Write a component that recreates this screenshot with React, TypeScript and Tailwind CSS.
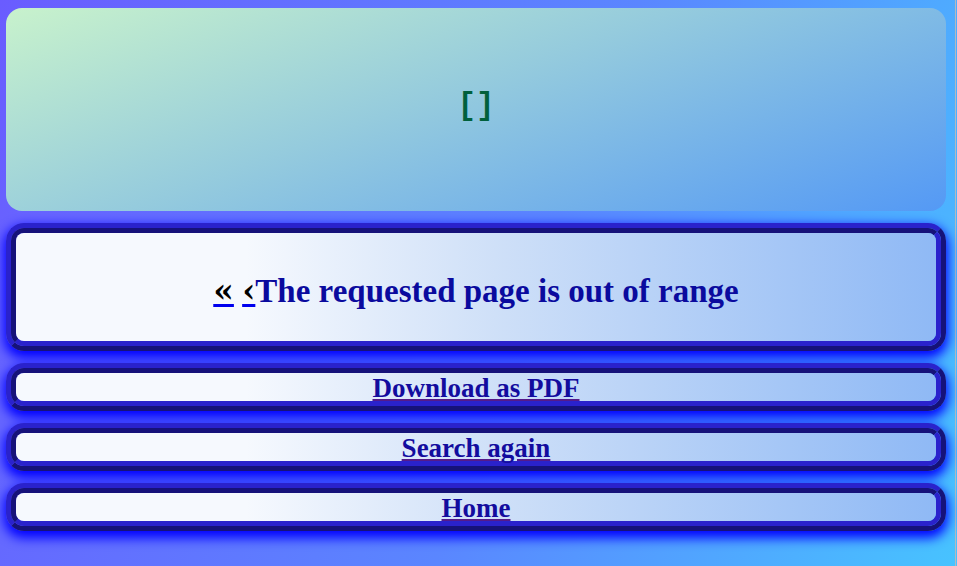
import React from "react";

const serif = "font-['Liberation_Serif','Times_New_Roman',serif]";

function Ridge({ h, children }: { h: string; children: React.ReactNode }) {
  return (
    <div className={`${h} rounded-[18px] border-[5px] border-t-[#2a22cc] border-l-[#2a22cc] border-b-[#16127a] border-r-[#16127a] shadow-[0_5px_12px_2px_#0000ff] flex`}>
      <div className="flex-1 rounded-[13px] border-[5px] border-t-[#16127a] border-l-[#16127a] border-b-[#2a22cc] border-r-[#2a22cc] flex">
        <div className="flex-1 rounded-[8px] bg-[linear-gradient(to_right,#f6f9fe_25%,#cfe0f8_52%,#8fb9f5)] flex items-center justify-center">
          {children}
        </div>
      </div>
    </div>
  );
}

function Row({ label }: { label: string }) {
  return (
    <Ridge h="h-[48px]">
      <a href="#" className={`${serif} text-[27px] leading-[28px] pt-[2px] font-bold text-[#551a8b] underline decoration-[#551a8b]`}>
        <span className="text-[#130c9e]">{label}</span>
      </a>
    </Ridge>
  );
}

export default function App() {
  return (
    <div className="min-h-screen bg-[linear-gradient(110deg,#6a5cff_0%,#5a86ff_55%,#47c3ff_100%)]">
      <div className="w-[956px] min-h-screen border-r border-[#b4b8c0] pl-[6px] pt-[8px] pb-[20px]">
        <div className="w-[940px] flex flex-col gap-[12px]">
          <div className="h-[203px] rounded-[16px] bg-[linear-gradient(160deg,#c8f2cc_0%,#95cbdd_45%,#5499f5_100%)] flex items-center justify-center">
            <span className="font-['Liberation_Mono',monospace] font-bold text-[31px] leading-none text-[#00603c] pb-[8px]">[]</span>
          </div>
          <Ridge h="h-[128px]">
            <h1 className={`${serif} text-[33px] leading-[38px] font-bold text-[#0a0a9e] pt-[7px]`}>
              <a href="#" className="text-[#0000ee] underline decoration-[#0000ee]"><span className="text-black font-['DejaVu_Serif',serif]">«</span></a>{" "}
              <a href="#" className="text-[#0000ee] underline decoration-[#0000ee]"><span className="text-black font-['DejaVu_Serif',serif]">‹</span></a>
              The requested page is out of range
            </h1>
          </Ridge>
          <Row label="Download as PDF" />
          <Row label="Search again" />
          <Row label="Home" />
        </div>
      </div>
    </div>
  );
}
